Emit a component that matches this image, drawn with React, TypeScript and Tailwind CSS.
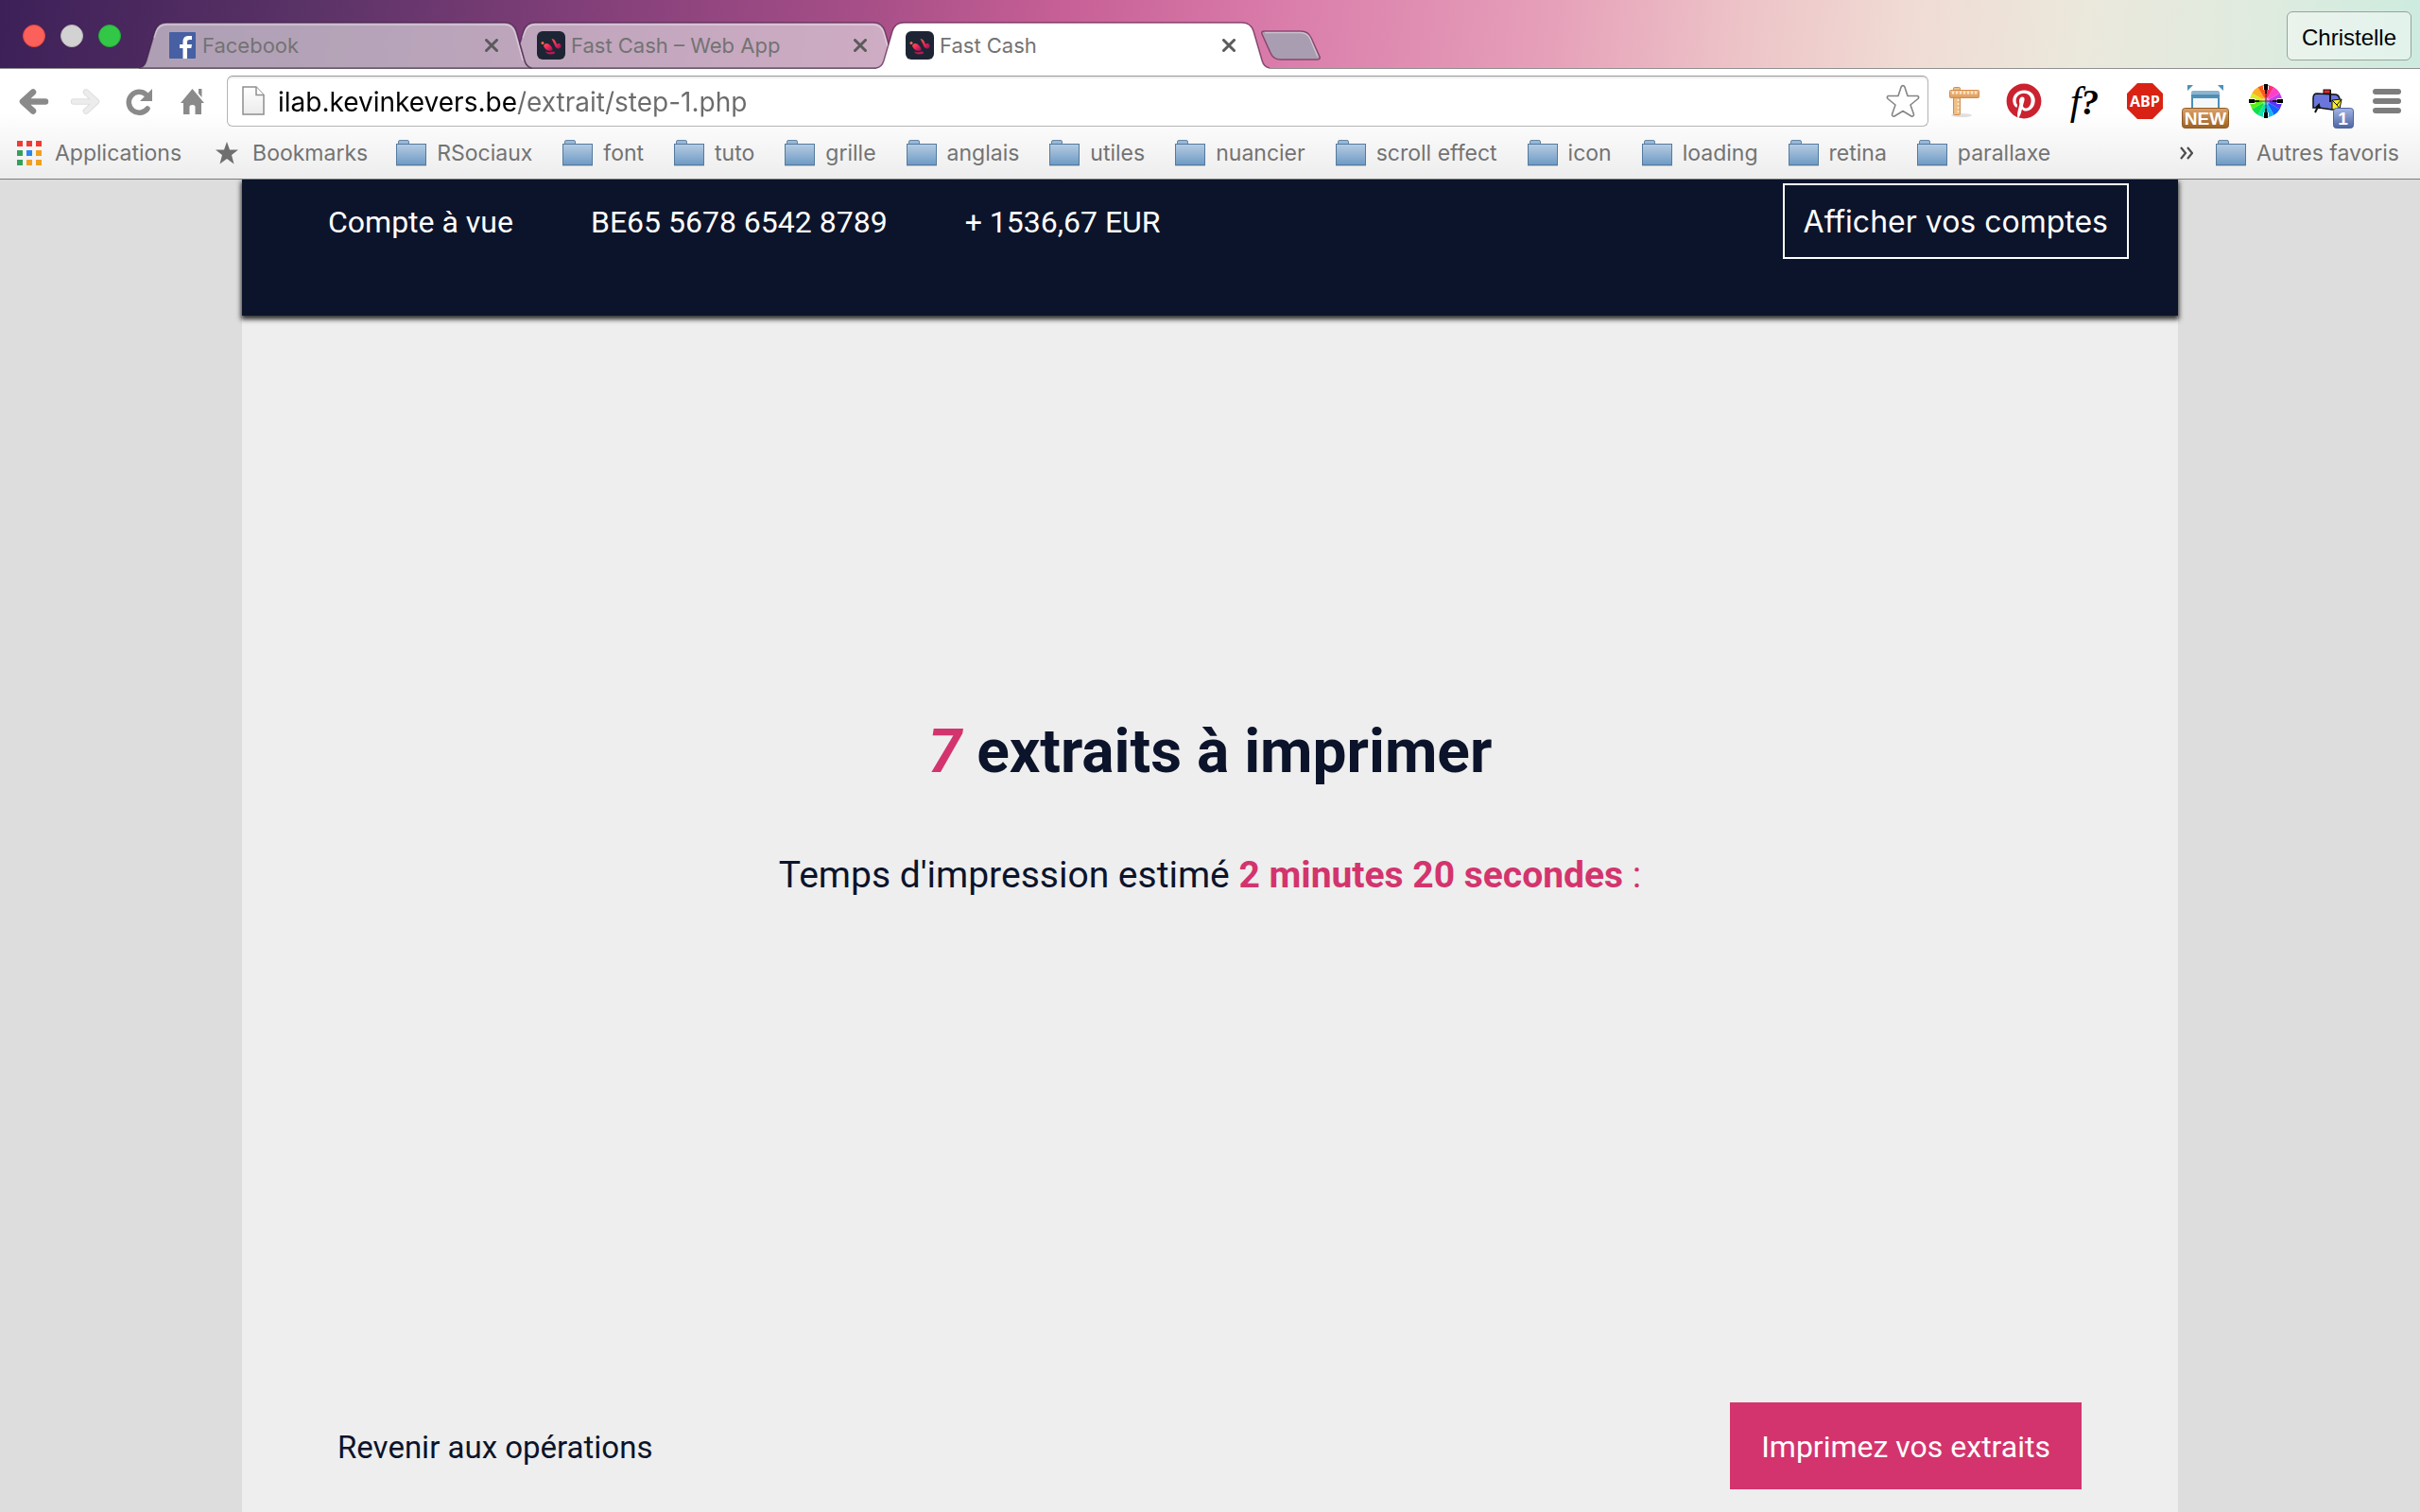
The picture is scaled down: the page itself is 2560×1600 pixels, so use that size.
import React from 'react';
import { FaPinterest } from 'react-icons/fa';

const INACTIVE_FIRST =
  'M0 48 Q6 47 8 40 L17 9 Q20 0 29 0 H387 Q396 0 399 9 L408 40 Q410 47 416 48 Z';
const INACTIVE_BEHIND =
  'M13 22 L17 9 Q20 0 29 0 H387 Q396 0 399 9 L408 40 Q410 47 416 48 H26 Q20 47 18 40 Z';

type TabKind = 'first' | 'behind' | 'active';

function TabShape({ kind }: { kind: TabKind }) {
  if (kind === 'active') {
    return (
      <svg className="absolute inset-0 overflow-visible" width="416" height="49" viewBox="0 0 416 49" aria-hidden="true">
        <path d="M0 48 Q6 47 8 40 L17 9 Q20 0 29 0 H387 Q396 0 399 9 L408 40 Q410 47 416 48 V50 H0 Z" fill="#fff" />
        <path d="M0 48 Q6 47 8 40 L17 9 Q20 0 29 0 H387 Q396 0 399 9 L408 40 Q410 47 416 48" fill="none" stroke="#5a1f4a" strokeOpacity=".7" strokeWidth="1.5" />
      </svg>
    );
  }
  const d = kind === 'first' ? INACTIVE_FIRST : INACTIVE_BEHIND;
  return (
    <svg className="absolute inset-0 overflow-visible" width="416" height="48" viewBox="0 0 416 48" aria-hidden="true">
      <path d={d} fill="#e0d9df" fillOpacity=".67" stroke="#3a1540" strokeOpacity=".55" strokeWidth="1.5" />
      <path d="M16 16 L18 10 Q21 2 29 2 H387 Q395 2 398 11 L406 40" fill="none" stroke="#fff" strokeOpacity=".4" strokeWidth="1.5" />
    </svg>
  );
}

function FacebookIcon() {
  return (
    <svg width="28" height="28" viewBox="0 0 28 28" aria-hidden="true">
      <rect width="28" height="28" rx="1" fill="#4660a3" />
      <path d="M14.5 28V17H11V13h3.500V10.200C14.500 6 16.800 4 20.500 4H24v4h-2.200C19.800 8 19 8.800 19 10.500V13h5l-.7 4H19v11z" fill="#fff" />
    </svg>
  );
}

function FastCashIcon() {
  return (
    <svg width="30" height="30" viewBox="0 0 30 30" aria-hidden="true">
      <defs>
        <linearGradient id="fc" x1="0" y1="0" x2="1" y2="1">
          <stop offset="0" stopColor="#ff5a4e" />
          <stop offset=".5" stopColor="#f0265b" />
          <stop offset="1" stopColor="#8a1252" />
        </linearGradient>
      </defs>
      <rect width="30" height="30" rx="6" fill="#1d2535" />
      <circle cx="6" cy="12.500" r="1.500" fill="#ff6a4a" />
      <path d="M7 15 C9 12 12 12.500 14 15 C16 17 17.500 19.500 16 20.500 C13 21.500 8 20 7 15Z" fill="url(#fc)" />
      <path d="M15.500 8 C18.500 8 20.500 11.500 21 14 C23 12 26 13.500 25.500 16.500 C25 19 21 19 19.500 16.500 C18 13 17 11 15.500 8Z" fill="url(#fc)" />
      <path d="M9 21.500 C12 23 14 22 17 21.500 C19 21.500 20 23 18 24 C14 25 10 24.500 9 21.500Z" fill="#b31c50" />
    </svg>
  );
}

const TABS: { title: string; icon: 'fb' | 'fc'; kind: TabKind }[] = [
  { title: 'Facebook', icon: 'fb', kind: 'first' },
  { title: 'Fast Cash – Web App', icon: 'fc', kind: 'behind' },
  { title: 'Fast Cash', icon: 'fc', kind: 'active' },
];

function TabStrip() {
  return (
    <div className="flex h-[72px] bg-[linear-gradient(97deg,#3d2058_0%,#5b3367_13%,#85407a_25%,#a84f88_36%,#c76096_44%,#da7dab_53%,#e6a0b9_64%,#edc4c8_72%,#f0dcd4_79%,#ebe8dc_86%,#e0ebdf_93%,#cdebdf_100%)] pl-6 pr-[9px]">
      <div className="flex items-center gap-4 pt-1">
        <button aria-label="Fermer la fenêtre" className="size-6 rounded-full border border-[#e2463f] bg-[#fc605b]" />
        <button aria-label="Réduire la fenêtre" className="size-6 rounded-full border border-[#b8b8b8] bg-[#d2d2d2]" />
        <button aria-label="Agrandir la fenêtre" className="size-6 rounded-full border border-[#24ac36] bg-[#33c748]" />
      </div>
      <div className="ml-[19px] flex items-end">
        {TABS.map((t) => (
          <div key={t.title} className="relative -mr-[26px] h-12 w-[416px]">
            <TabShape kind={t.kind} />
            <div className="relative flex h-full items-center gap-1.5 pl-[31px] pr-9">
              <span className="flex w-[30px] justify-center">{t.icon === 'fb' ? <FacebookIcon /> : <FastCashIcon />}</span>
              <a href="#" className="text-[22px] leading-7 text-[#737373]">{t.title}</a>
              <button aria-label={'Fermer ' + t.title} className="ml-auto">
                <svg width="14" height="14" viewBox="0 0 14 14" aria-hidden="true">
                  <path d="M1.500 1.500 L12.500 12.500 M12.500 1.500 L1.500 12.500" stroke="#5c5a5c" strokeWidth="3" strokeLinecap="round" />
                </svg>
              </button>
            </div>
          </div>
        ))}
      </div>
      <button aria-label="Nouvel onglet" className="relative ml-4 mt-8 h-8 w-16">
        <svg width="64" height="32" viewBox="0 0 64 32" aria-hidden="true">
          <path d="M4 1 H43 Q51 1 54 8 L63 28 Q64 31 60 31 H22 Q14 31 11 24 L2 4 Q1 1 4 1Z" fill="#a99db1" stroke="#8a4570" strokeWidth="1.500" />
          <path d="M5 2.500 H43 Q50 2.500 53 9 L61 28" fill="none" stroke="#fff" strokeOpacity=".4" strokeWidth="1.500" />
        </svg>
      </button>
      <button className="ml-auto mt-3 h-[52px] w-[132px] rounded-md border border-[#98a39d] bg-white/40 pt-1 font-['Liberation_Sans',sans-serif] text-2xl text-black">
        Christelle
      </button>
    </div>
  );
}

function NavButton({ label, children }: { label: string; children: React.ReactNode }) {
  return (
    <button aria-label={label} className="w-14">
      <svg width="56" height="54" viewBox="0 0 56 54" aria-hidden="true">{children}</svg>
    </button>
  );
}

function ExtButton({ label, children }: { label: string; children: React.ReactNode }) {
  return (
    <button aria-label={label} className="w-16">
      <svg className="overflow-visible" width="64" height="54" viewBox="0 0 64 54" aria-hidden="true">{children}</svg>
    </button>
  );
}

const WHEEL = ['#ff2d6f', '#ff3fc8', '#c63cf0', '#5a35f5', '#1560ff', '#10b5f5', '#10e0b0', '#12e04a', '#5cf01a', '#d8ee20', '#ffb020', '#ff5a20'];

function wedge(i: number) {
  const a = (i * Math.PI) / 6 - Math.PI / 2;
  const b = a + Math.PI / 6;
  const p = (t: number) => `${(32 + 17 * Math.cos(t)).toFixed(2)} ${(27 + 17 * Math.sin(t)).toFixed(2)}`;
  return `M32 27 L${p(a)} A17 17 0 0 1 ${p(b)} Z`;
}

function Extensions() {
  return (
    <div className="flex h-[54px]">
      <ExtButton label="Règle">
        <defs>
          <linearGradient id="wood" x1="0" y1="0" x2="0" y2="1">
            <stop offset="0" stopColor="#f3c48d" />
            <stop offset="1" stopColor="#dd9a5c" />
          </linearGradient>
        </defs>
        <ellipse cx="30" cy="42" rx="11" ry="2" fill="#000" opacity=".12" />
        <rect x="21.500" y="12.500" width="7" height="29" rx="1" fill="#efbe86" stroke="#d08d50" />
        <rect x="17.500" y="15.500" width="31" height="8" rx="1" fill="url(#wood)" stroke="#d08d50" />
        <path d="M20 18 H46" stroke="#fbe6c8" strokeWidth="3" strokeDasharray="2 2" />
        <path d="M26.500 25 V40" stroke="#fbe6c8" strokeWidth="2" strokeDasharray="2 2" />
      </ExtButton>
      <button aria-label="Pinterest" className="flex w-16 items-center justify-center">
        <span className="rounded-full bg-white text-[38px] text-[#cb2230]"><FaPinterest /></span>
      </button>
      <button className="h-[54px] w-16 font-['Liberation_Serif',serif] text-[42px] italic leading-[50px] text-black">
        f<span className="text-[38px] font-bold">?</span>
      </button>
      <button aria-label="Adblock Plus" className="w-16">
        <svg width="64" height="54" viewBox="0 0 64 54">
          <path d="M24 8 H40 L51 19 V35 L40 46 H24 L13 35 V19 Z" fill="#d92214" />
          <text x="32" y="33" textAnchor="middle" fontFamily="Open Sans, sans-serif" fontWeight="700" fontSize="16" fill="#fff">ABP</text>
        </svg>
      </button>
      <button aria-label="Capture, nouveau" className="w-16">
        <svg className="overflow-visible" width="64" height="54" viewBox="0 0 64 54">
          <defs>
            <linearGradient id="nw" x1="0" y1="0" x2="0" y2="1">
              <stop offset="0" stopColor="#dca36c" />
              <stop offset="1" stopColor="#9c6020" />
            </linearGradient>
          </defs>
          <path d="M13 10 h6 l-6 6z M51 10 h-6 l6 6z" fill="#4b90b8" />
          <path d="M18 35 V23 H46 V35" fill="#f4f7f9" stroke="#4b90b8" strokeWidth="2" />
          <path d="M17 23 V18 Q17 16 19 16 H45 Q47 16 47 18 V23Z" fill="#8bb4d0" />
          <path d="M17 21.500 H47" stroke="#4589b0" strokeWidth="2.500" />
          <rect x="7.500" y="34.500" width="49" height="21" rx="3" fill="url(#nw)" stroke="#8f5c25" />
          <text x="32" y="52" textAnchor="middle" fontFamily="Liberation Sans, sans-serif" fontWeight="700" fontSize="19" fill="#fff">NEW</text>
        </svg>
      </button>
      <ExtButton label="Pipette à couleurs">
        {WHEEL.map((c, i) => (
          <path key={c} d={wedge(i)} fill={c} />
        ))}
        <circle cx="32" cy="27" r="4" fill="#fff" opacity=".35" />
        <path d="M32 14 V40 M19 27 H45" stroke="#222" strokeOpacity=".8" />
        <path d="M18 24 v6 M46 24 v6" stroke="#fff" strokeWidth="5" />
        <path d="M29 13 h6 M29 41 h6" stroke="#fff" strokeWidth="4" />
        <path d="M32 9 V15 M32 39 V45 M14 27 H20 M44 27 H50" stroke="#000" strokeWidth="4" />
        <path d="M32 15 V19 M32 35 V39 M20 27 H25 M39 27 H44" stroke="#000" strokeWidth="1.500" />
      </ExtButton>
      <button aria-label="Messages, 1 nouveau" className="w-16">
        <svg className="overflow-visible" width="64" height="54" viewBox="0 0 64 54">
          <defs>
            <linearGradient id="bl" x1="0" y1="0" x2="0" y2="1">
              <stop offset="0" stopColor="#a4b5e2" />
              <stop offset="1" stopColor="#4c65a3" />
            </linearGradient>
          </defs>
          <path d="M18 34 V24 Q18 19 22 19 L42 20 Q46 21 46 26 V35 L38 36 L24 34 Z" fill="#6b76dc" stroke="#111" strokeWidth="1.500" />
          <path d="M38 26 L48 25 L46 35 L38 36Z" fill="#ffee22" stroke="#111" />
          <path d="M38 26 L43 31 L48 25 M43 31 L46 35" fill="none" stroke="#111" />
          <path d="M36 15 V28" stroke="#111" strokeWidth="2" />
          <rect x="29" y="15" width="7" height="4" fill="#e02a2a" stroke="#111" />
          <path d="M20 39 L24 31 M21 34 L24 31 L25 35" stroke="#111" strokeWidth="2" fill="none" />
          <rect x="39.500" y="34.500" width="21" height="21" rx="3" fill="url(#bl)" stroke="#4d639c" />
          <text x="49.500" y="52" textAnchor="middle" fontFamily="Liberation Sans, sans-serif" fontWeight="700" fontSize="19" fill="#fff">1</text>
        </svg>
      </button>
      <ExtButton label="Menu">
        <g fill="#7d7d7d">
          <rect x="17" y="14" width="30" height="6" rx="3" />
          <rect x="17" y="24" width="30" height="6" rx="3" />
          <rect x="17" y="34" width="30" height="6" rx="3" />
        </g>
      </ExtButton>
    </div>
  );
}

function Toolbar() {
  return (
    <div className="flex pl-[7px] pr-[3px]">
      <NavButton label="Page précédente">
        <path d="M41 27.500 H18 M28 17.500 L17 27.500 L28 37.500" fill="none" stroke="#8a8a8a" strokeWidth="6.500" strokeLinecap="round" strokeLinejoin="round" />
      </NavButton>
      <NavButton label="Page suivante">
        <path d="M15 27.500 H38 M28 17.500 L39 27.500 L28 37.500" fill="none" stroke="#dedede" strokeWidth="6.500" strokeLinecap="round" strokeLinejoin="round" />
        <path d="M15 27.500 H38 M28 17.500 L39 27.500 L28 37.500" fill="none" stroke="#ececec" strokeWidth="4.500" strokeLinecap="round" strokeLinejoin="round" />
      </NavButton>
      <NavButton label="Actualiser">
        <path d="M37 35 A11 11 0 1 1 35.500 20" fill="none" stroke="#8a8a8a" strokeWidth="5.500" strokeLinecap="round" />
        <path d="M42 14 V27 H29 Z" fill="#8a8a8a" />
      </NavButton>
      <NavButton label="Accueil">
        <path d="M28.500 14 L41 29 H38 V41 H31.500 V33 Q31.500 31 28.500 31 Q25.500 31 25.500 33 V41 H19 V29 H16 Z M35 14 H38.500 V23 L35 19 Z" fill="#8a8a8a" />
      </NavButton>
      <div className="ml-[9px] flex h-[54px] flex-1 items-center rounded-md border border-[#b4b4b4] border-t-[#999] bg-white pl-[15px] pr-2 shadow-[inset_0_2px_1px_#eee]">
        <svg width="24" height="32" viewBox="0 0 24 32" aria-hidden="true">
          <defs>
            <linearGradient id="pg" x1="0" y1="0" x2="0" y2="1">
              <stop offset="0" stopColor="#fff" />
              <stop offset="1" stopColor="#ebebeb" />
            </linearGradient>
          </defs>
          <path d="M1 1 H15 L23 9.500 V30 H1 Z" fill="url(#pg)" stroke="#8f8f8f" strokeWidth="1.500" />
          <path d="M15 1 V9.500 H23" fill="#fff" stroke="#8f8f8f" strokeWidth="1.500" />
        </svg>
        <input
          aria-label="Adresse"
          defaultValue="ilab.kevinkevers.be/extrait/step-1.php"
          className="ml-3.5 h-10 min-w-0 flex-1 bg-[linear-gradient(90deg,#000_253px,#6b6b6b_253px)] bg-clip-text pt-0.5 text-[28px] leading-9 text-transparent outline-none"
        />
        <button aria-label="Ajouter aux favoris">
          <svg width="36" height="36" viewBox="0 0 36 36" aria-hidden="true">
            <path d="M16.300 2.500 Q18 .8 19.700 2.500 L23 12.500 H33.500 Q35.500 13.500 34 15.500 L26 22 L29.500 32 Q29.500 34.500 27 34 L18 28.500 L9 34 Q6.500 34.500 6.500 32 L10 22 L2 15.500 Q.5 13.500 2.500 12.500 H13 Z" fill="#fff" stroke="#858585" strokeWidth="1.600" strokeLinejoin="round" />
          </svg>
        </button>
      </div>
      <div className="ml-[5px]"><Extensions /></div>
    </div>
  );
}

function FolderIcon() {
  return (
    <svg width="32" height="28" viewBox="0 0 32 28" aria-hidden="true">
      <defs>
        <linearGradient id="fd" x1="0" y1="0" x2="0" y2="1">
          <stop offset="0" stopColor="#b6cce2" />
          <stop offset="1" stopColor="#6d9ac4" />
        </linearGradient>
      </defs>
      <path d="M2.500 5 V2 Q2.500 .5 4 .5 H12 Q13.500 .5 13.500 2 V5" fill="#9ab8d6" stroke="#6488a9" />
      <rect x=".5" y="4.500" width="31" height="22" fill="url(#fd)" stroke="#547a9e" />
      <path d="M0 27.500 H32" stroke="#000" strokeOpacity=".2" />
    </svg>
  );
}

const FOLDERS = ['RSociaux', 'font', 'tuto', 'grille', 'anglais', 'utiles', 'nuancier', 'scroll effect', 'icon', 'loading', 'retina', 'parallaxe'];
const APP_DOTS = ['#f23a34', '#f23a34', '#f23a34', '#35a05a', '#2b86f0', '#f0a020', '#35a05a', '#f0a020', '#f0a020'];

function BookmarksBar() {
  return (
    <nav aria-label="Favoris" className="flex h-[55px] items-center pl-[18px] pr-[22px] text-[23px] leading-7 text-[#737373]">
      <a href="#" className="flex items-center gap-3.5">
        <span className="grid grid-cols-3 gap-x-1 gap-y-1">
          {APP_DOTS.map((c, i) => (
            <span key={i} className="size-1.5" style={{ backgroundColor: c }} />
          ))}
        </span>
        Applications
      </a>
      <a href="#" className="ml-9 flex items-center gap-[15px]">
        <svg width="24" height="24" viewBox="0 0 24 24" aria-hidden="true">
          <path d="M12 0 L15 8.500 H24 L17 14 L19.500 23.500 L12 18 L4.500 23.500 L7 14 L0 8.500 H9 Z" fill="#6f6f6f" />
        </svg>
        Bookmarks
      </a>
      <div className="ml-[30px] flex items-center gap-8">
        {FOLDERS.map((f) => (
          <a key={f} href="#" className="flex items-center gap-[11px] whitespace-nowrap">
            <FolderIcon />
            {f}
          </a>
        ))}
      </div>
      <button aria-label="Plus de favoris" className="ml-auto">
        <svg width="14" height="14" viewBox="0 0 14 14" aria-hidden="true">
          <path d="M1 1 L6 7 L1 13 M8 1 L13 7 L8 13" fill="none" stroke="#4d4d4d" strokeWidth="2.200" />
        </svg>
      </button>
      <a href="#" className="ml-6 flex items-center gap-[11px] whitespace-nowrap">
        <FolderIcon />
        Autres favoris
      </a>
    </nav>
  );
}

export default function App() {
  return (
    <div className="flex min-h-screen flex-col bg-[#ddd] font-['Inter',sans-serif]">
      <header>
        <TabStrip />
        <div className="border-b border-t border-b-[#7d7d7d] border-t-[#919191] bg-linear-to-b from-white from-40% to-[#ededed] pt-[7px]">
          <Toolbar />
          <BookmarksBar />
        </div>
      </header>
      <div className="mx-auto flex w-4/5 flex-1 flex-col bg-[#eee] font-['Roboto',sans-serif] text-[32px] leading-10 text-[#0c142b]">
        <div className="flex items-center gap-[82px] bg-[#0c142b] pb-[60px] pl-[91px] pr-[52px] pt-1 text-white shadow-[0_3px_5px_1px_rgba(0,0,0,0.8)] [clip-path:inset(0_-8px_-12px_-8px)]">
          <span className="pt-0.5">Compte à vue</span>
          <span className="pt-0.5">BE65 5678 6542 8789</span>
          <span className="pt-0.5">+ 1536,67 EUR</span>
          <button className="ml-auto h-20 border-2 border-white px-5 pt-0.5 font-['Inter',sans-serif]">Afficher vos comptes</button>
        </div>
        <main className="flex flex-1 flex-col items-center justify-center pb-27 text-center">
          <h1 className="text-[64px] font-bold leading-[72px]">
            <em className="text-[#d3346d]">7</em> extraits à imprimer
          </h1>
          <p className="mt-[70px] text-[39px] leading-[48px]">
            Temps d'impression estimé{' '}
            <span className="text-[#d3346d]"><strong>2 minutes 20 secondes</strong> :</span>
          </p>
        </main>
        <div className="flex items-center justify-between pb-6 pl-[101px] pr-[102px]">
          <a href="#" className="pt-1 text-[33px]">Revenir aux opérations</a>
          <button className="h-[92px] bg-[#d3346d] px-[33px] pt-0.5 text-white">Imprimez vos extraits</button>
        </div>
      </div>
    </div>
  );
}
